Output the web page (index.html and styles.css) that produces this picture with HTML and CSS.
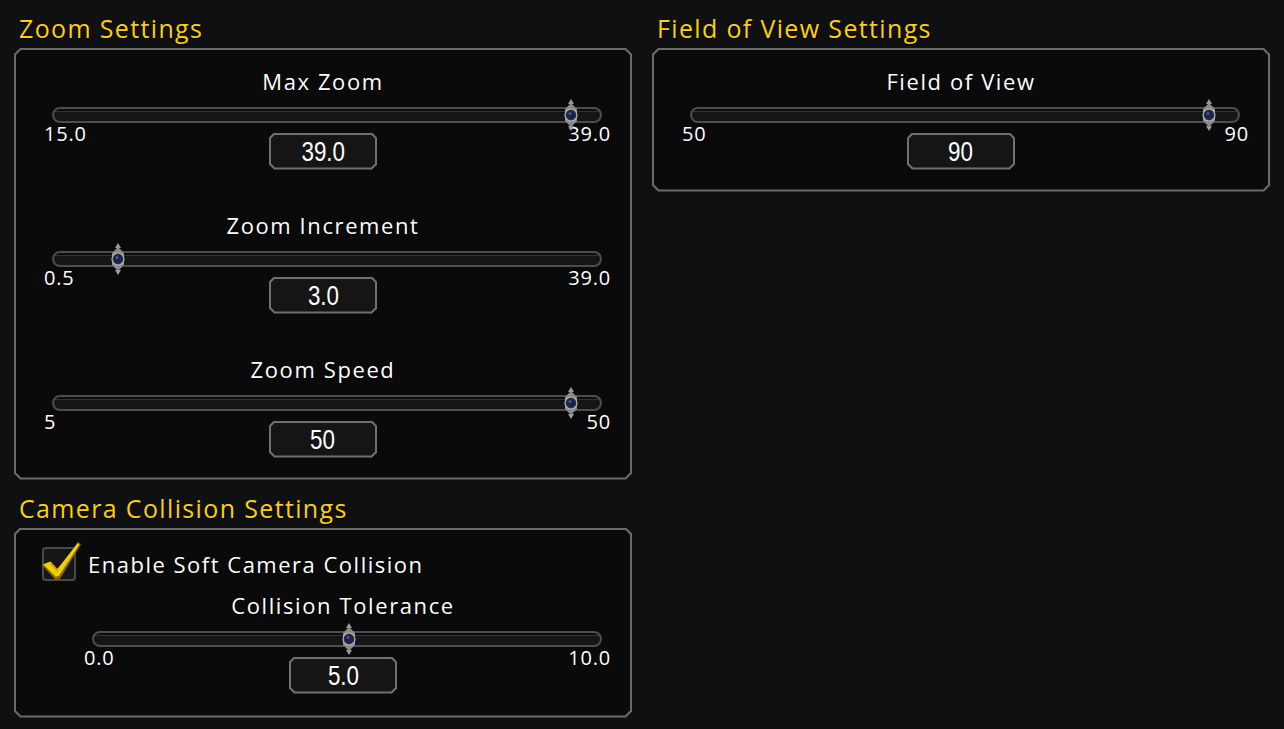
FILE: index.html
```html
<!DOCTYPE html>
<html>
<head>
<meta charset="utf-8">
<link rel="stylesheet" href="styles.css">
</head>
<body>
<div class="page">
  <div class="column">
    <h2 class="section-title first">Zoom Settings</h2>
    <div class="panel">
      <div class="panel-inner panel-sliders">
        <div class="slider-block">
          <div class="slider-title">Max Zoom</div>
          <div class="track"><span class="thumb" style="left: calc(31px + 1 * (100% - 62px))"><svg viewBox="0 0 18 32" width="18" height="32"><path d="M9 0 L12 5 L6 5 Z M9 32 L12 27 L6 27 Z" fill="#9a9a9a"/><path d="M9 4 L15 10 L15 22 L9 28 L3 22 L3 10 Z" fill="#8a8a8a"/><circle cx="9" cy="16" r="6" fill="#2b2f48" stroke="#b5b5b5" stroke-width="1.2"/><circle cx="9" cy="16" r="4" fill="#1b2250"/><circle cx="8" cy="14.5" r="1.5" fill="#4b5690"/></svg></span></div>
          <div class="slider-row">
            <span class="range-label min">15.0</span>
            <div class="value-box"><span class="value-text"><span class="narrow">39.0</span></span></div>
            <span class="range-label max">39.0</span>
          </div>
        </div>
        <div class="slider-block">
          <div class="slider-title">Zoom Increment</div>
          <div class="track"><span class="thumb" style="left: calc(31px + 0.0649 * (100% - 62px))"><svg viewBox="0 0 18 32" width="18" height="32"><path d="M9 0 L12 5 L6 5 Z M9 32 L12 27 L6 27 Z" fill="#9a9a9a"/><path d="M9 4 L15 10 L15 22 L9 28 L3 22 L3 10 Z" fill="#8a8a8a"/><circle cx="9" cy="16" r="6" fill="#2b2f48" stroke="#b5b5b5" stroke-width="1.2"/><circle cx="9" cy="16" r="4" fill="#1b2250"/><circle cx="8" cy="14.5" r="1.5" fill="#4b5690"/></svg></span></div>
          <div class="slider-row">
            <span class="range-label min">0.5</span>
            <div class="value-box"><span class="value-text"><span class="narrow">3.0</span></span></div>
            <span class="range-label max">39.0</span>
          </div>
        </div>
        <div class="slider-block">
          <div class="slider-title">Zoom Speed</div>
          <div class="track"><span class="thumb" style="left: calc(31px + 1 * (100% - 62px))"><svg viewBox="0 0 18 32" width="18" height="32"><path d="M9 0 L12 5 L6 5 Z M9 32 L12 27 L6 27 Z" fill="#9a9a9a"/><path d="M9 4 L15 10 L15 22 L9 28 L3 22 L3 10 Z" fill="#8a8a8a"/><circle cx="9" cy="16" r="6" fill="#2b2f48" stroke="#b5b5b5" stroke-width="1.2"/><circle cx="9" cy="16" r="4" fill="#1b2250"/><circle cx="8" cy="14.5" r="1.5" fill="#4b5690"/></svg></span></div>
          <div class="slider-row">
            <span class="range-label min">5</span>
            <div class="value-box"><span class="value-text"><span class="narrow">50</span></span></div>
            <span class="range-label max">50</span>
          </div>
        </div>
      </div>
    </div>

    <h2 class="section-title">Camera Collision Settings</h2>
    <div class="panel">
      <div class="panel-inner panel-collision">
        <label class="check-row">
          <span class="checkbox"><svg viewBox="0 0 40 40" width="42" height="42"><path d="M2 24 L10 21 L17 29 L36 2 L39 4 L19 37 L15 38 Z" fill="#8a6a00"/><path d="M3 23 L10 20.5 L16.5 27.5 L36 3 L37.5 4.5 L18 34 L15 35 Z" fill="#f2cf00"/><path d="M10 20.5 L16.5 27.5 L17 31 L10 23 Z" fill="#c9a000"/></svg></span>
          <span class="check-label">Enable Soft Camera Collision</span>
        </label>
        <div class="slider-block indented">
          <div class="slider-title">Collision Tolerance</div>
          <div class="track"><span class="thumb" style="left: calc(31px + 0.5 * (100% - 62px))"><svg viewBox="0 0 18 32" width="18" height="32"><path d="M9 0 L12 5 L6 5 Z M9 32 L12 27 L6 27 Z" fill="#9a9a9a"/><path d="M9 4 L15 10 L15 22 L9 28 L3 22 L3 10 Z" fill="#8a8a8a"/><circle cx="9" cy="16" r="6" fill="#2b2f48" stroke="#b5b5b5" stroke-width="1.2"/><circle cx="9" cy="16" r="4" fill="#1b2250"/><circle cx="8" cy="14.5" r="1.5" fill="#4b5690"/></svg></span></div>
          <div class="slider-row">
            <span class="range-label min">0.0</span>
            <div class="value-box"><span class="value-text"><span class="narrow">5.0</span></span></div>
            <span class="range-label max">10.0</span>
          </div>
        </div>
      </div>
    </div>
  </div>

  <div class="column">
    <h2 class="section-title first">Field of View Settings</h2>
    <div class="panel">
      <div class="panel-inner panel-sliders">
        <div class="slider-block">
          <div class="slider-title">Field of View</div>
          <div class="track"><span class="thumb" style="left: calc(31px + 1 * (100% - 62px))"><svg viewBox="0 0 18 32" width="18" height="32"><path d="M9 0 L12 5 L6 5 Z M9 32 L12 27 L6 27 Z" fill="#9a9a9a"/><path d="M9 4 L15 10 L15 22 L9 28 L3 22 L3 10 Z" fill="#8a8a8a"/><circle cx="9" cy="16" r="6" fill="#2b2f48" stroke="#b5b5b5" stroke-width="1.2"/><circle cx="9" cy="16" r="4" fill="#1b2250"/><circle cx="8" cy="14.5" r="1.5" fill="#4b5690"/></svg></span></div>
          <div class="slider-row">
            <span class="range-label min">50</span>
            <div class="value-box"><span class="value-text"><span class="narrow">90</span></span></div>
            <span class="range-label max">90</span>
          </div>
        </div>
      </div>
    </div>
  </div>
</div>
</body>
</html>
```

FILE: styles.css
```css
* { box-sizing: border-box; }

html, body {
  margin: 0;
  padding: 0;
  background: #0f1012;
  color: #ffffff;
  font-family: "Open Sans", "Noto Sans", sans-serif;
}

.page {
  display: grid;
  grid-template-columns: 618px 618px;
  column-gap: 20px;
  padding-left: 14px;
  width: 1284px;
  height: 729px;
}

.column {
  display: flex;
  flex-direction: column;
}

.section-title {
  margin: 13px 0 5px 0;
  padding-left: 5px;
  font-size: 25px;
  line-height: 30px;
  font-weight: 400;
  color: #ffd100;
  text-shadow: 1px 1px 1px #000;
  letter-spacing: 1.35px;
}

.section-title.first {
  margin-top: 13px;
}

.panel {
  background: #6a6a6a;
  padding: 2px;
  clip-path: polygon(6px 0, calc(100% - 6px) 0, 100% 6px, 100% calc(100% - 6px), calc(100% - 6px) 100%, 6px 100%, 0 calc(100% - 6px), 0 6px);
}

.panel-inner {
  background: #0a0a0a;
  clip-path: polygon(5px 0, calc(100% - 5px) 0, 100% 5px, 100% calc(100% - 5px), calc(100% - 5px) 100%, 5px 100%, 0 calc(100% - 5px), 0 5px);
}

.panel-sliders {
  display: flex;
  flex-direction: column;
  gap: 42.5px;
  padding: 18px 0 20px 0;
}

.slider-block {
  display: flex;
  flex-direction: column;
}

.slider-block.indented {
  margin-left: 40px;
}

.slider-title {
  text-align: center;
  font-size: 22px;
  line-height: 26px;
  letter-spacing: 1.6px;
  text-shadow: 1px 1px 1px #000;
  margin-bottom: 12.5px;
}

.track {
  position: relative;
  height: 16px;
  margin: 0 28px 0 36px;
  border: 2px solid #4d4d4d;
  border-radius: 8px;
  background: linear-gradient(to bottom, #0c0c0c 0, #0c0c0c 2px, #333333 2px, #333333 3px, #151515 3px, #151515 100%);
}

.thumb {
  position: absolute;
  top: 50%;
  width: 18px;
  height: 32px;
  margin-left: -7px;
  margin-top: -16px;
  display: block;
}

.thumb svg { display: block; }

.slider-row {
  display: grid;
  grid-template-columns: 1fr auto 1fr;
  align-items: start;
}

.range-label {
  font-size: 20px;
  line-height: 22px;
  letter-spacing: 0.8px;
  text-shadow: 1px 1px 1px #000;
}

.range-label.min {
  justify-self: start;
  padding-left: 28px;
}

.range-label.max {
  justify-self: end;
  padding-right: 19px;
}

.value-box {
  margin-top: 10px;
  width: 108px;
  height: 37px;
  background: #707070;
  padding: 2px;
  clip-path: polygon(5px 0, calc(100% - 5px) 0, 100% 5px, 100% calc(100% - 5px), calc(100% - 5px) 100%, 5px 100%, 0 calc(100% - 5px), 0 5px);
}

.value-text {
  display: flex;
  align-items: center;
  justify-content: center;
  width: 100%;
  height: 100%;
  background: #151515;
  clip-path: polygon(4px 0, calc(100% - 4px) 0, 100% 4px, 100% calc(100% - 4px), calc(100% - 4px) 100%, 4px 100%, 0 calc(100% - 4px), 0 4px);
  font-family: "Liberation Sans", Arial, sans-serif;
  font-size: 28px;
  line-height: 33px;
  padding-top: 1px;
  color: #ffffff;
}

.narrow {
  display: inline-block;
  transform: scaleX(0.8);
}

.panel-collision {
  padding: 17px 0 22px 0;
}

.check-row {
  display: flex;
  align-items: center;
  gap: 12px;
  padding-left: 26px;
  margin-bottom: 11.5px;
}

.checkbox {
  position: relative;
  width: 34px;
  height: 34px;
  border: 2px solid #4a4a4a;
  border-radius: 4px;
  background: #161616;
  flex: none;
}

.checkbox svg {
  position: absolute;
  left: -4px;
  top: -9px;
}

.check-label {
  font-size: 22px;
  line-height: 26px;
  letter-spacing: 1.5px;
  text-shadow: 1px 1px 1px #000;
}
```
